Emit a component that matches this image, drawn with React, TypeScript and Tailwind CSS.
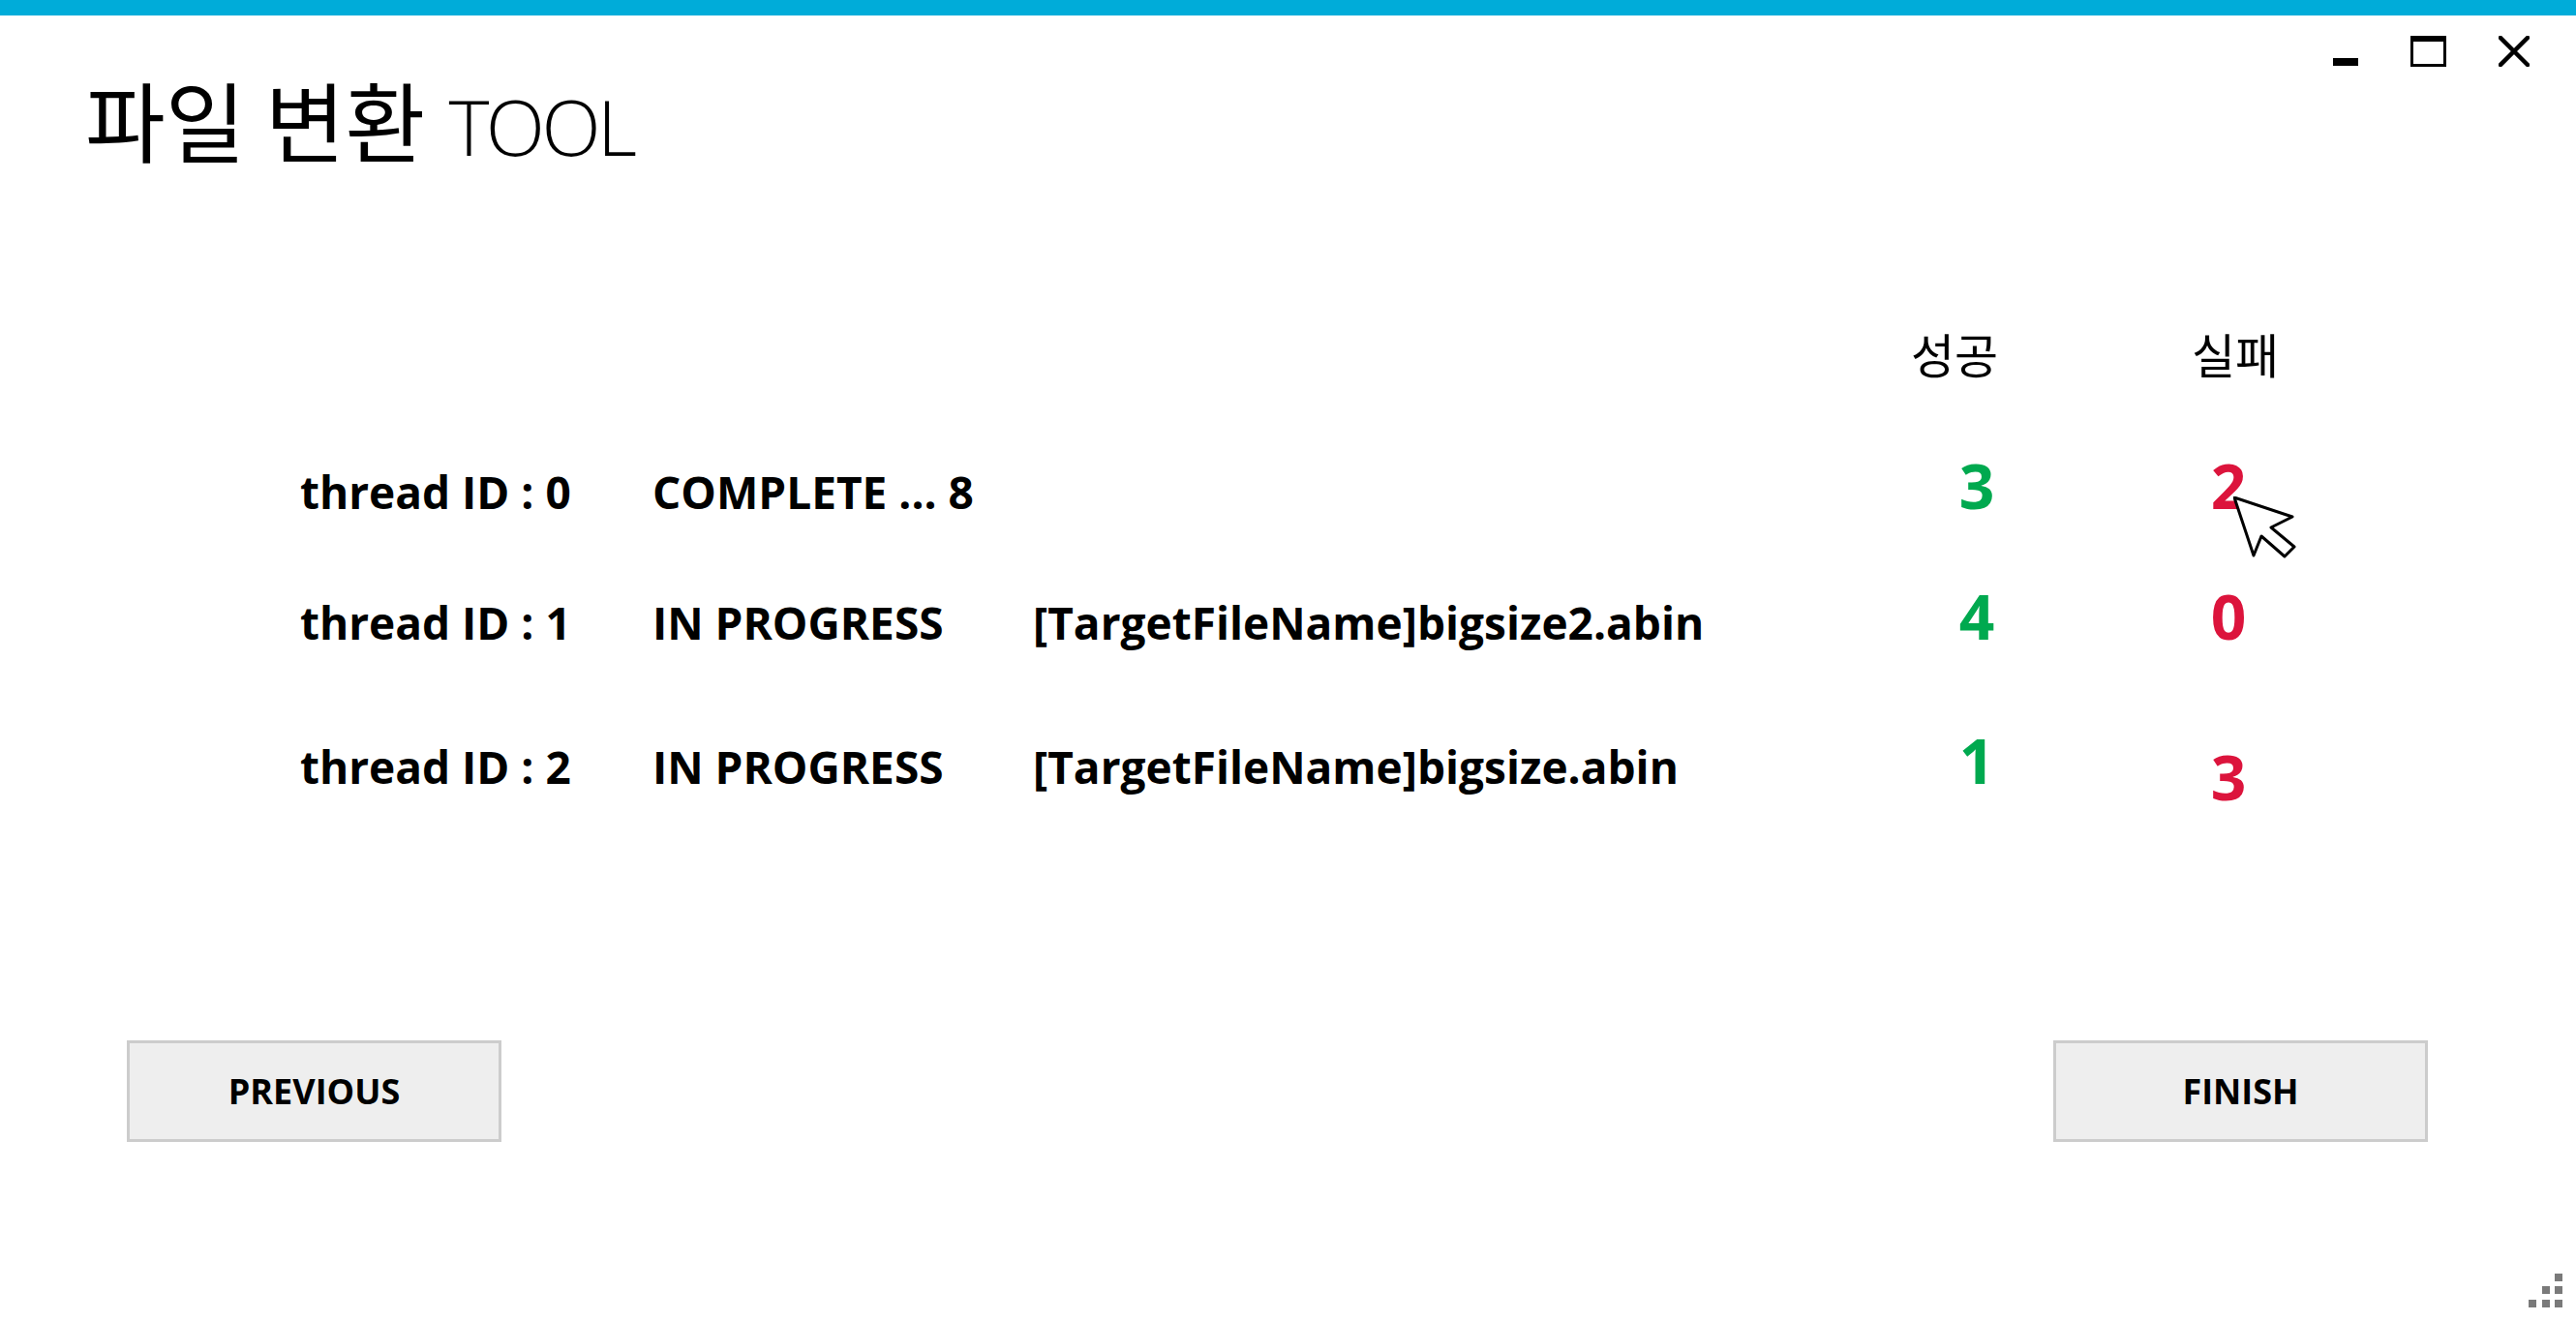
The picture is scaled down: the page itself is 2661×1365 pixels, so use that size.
import React from "react";

interface IThreadRow {
	id: number;
	status: string;
	file: string;
	success: number;
	fail: number;
	rowClass: string;
	failClass: string;
}

const rows: IThreadRow[] = [
	{ id: 0, status: "COMPLETE ... 8", file: "", success: 3, fail: 2, rowClass: "mt-[81px]", failClass: "" },
	{ id: 1, status: "IN PROGRESS", file: "[TargetFileName]bigsize2.abin", success: 4, fail: 0, rowClass: "mt-[71px]", failClass: "" },
	{ id: 2, status: "IN PROGRESS", file: "[TargetFileName]bigsize.abin", success: 1, fail: 3, rowClass: "mt-[85px]", failClass: "translate-y-[17px]" },
];

const WindowControls = () => (
	<div className="flex items-start gap-[54px] mt-[21px] mr-[48px]">
		<svg width="26" height="32" viewBox="0 0 26 32">
			<rect x="0" y="23" width="26" height="8" fill="#000" />
		</svg>
		<svg width="37" height="32" viewBox="0 0 37 32">
			<rect x="1.5" y="1.5" width="34" height="29" fill="none" stroke="#000" strokeWidth="3" />
			<rect x="0" y="0" width="37" height="6" fill="#000" />
		</svg>
		<svg width="32" height="32" viewBox="0 0 32 32">
			<path d="M2 2 L30 30 M30 2 L2 30" stroke="#000" strokeWidth="4.5" strokeLinecap="square" />
		</svg>
	</div>
);

const Button = ({ label }: { label: string }) => (
	<button className="w-[387px] h-[105px] bg-[#eeeeee] border-[3px] border-[#cccccc] flex items-center justify-center text-[36px] font-bold text-black">
		{label}
	</button>
);

const App = () => {
	return (
		<div className="w-[2661px] h-[1365px] bg-white relative flex flex-col overflow-hidden font-['Open_Sans','Noto_Sans_CJK_KR',sans-serif] text-black">
			<div className="h-[16px] bg-[#00acd9] shrink-0" />

			<header className="flex justify-between items-start">
				<h1 className="ml-[88px] mt-[61px] flex items-baseline leading-none">
					<span className="text-[90px] font-['Noto_Sans_CJK_KR',sans-serif] font-normal">파일 변환</span>
					<span className="ml-[24px] text-[80px] font-light tracking-[-3.5px]">TOOL</span>
				</h1>
				<WindowControls />
			</header>

			<main className="flex flex-col">
				<div className="flex mt-[170px] pl-[1974px] leading-none text-[49px] font-['Noto_Sans_CJK_KR',sans-serif]">
					<div className="w-[290px]">성공</div>
					<div>실패</div>
				</div>

				{rows.map((row) => (
					<div key={row.id} className={`${row.rowClass} flex items-baseline pl-[310px] leading-none font-bold`}>
						<div className="w-[364px] text-[46px]">thread ID : {row.id}</div>
						<div className="w-[393px] text-[46px]">{row.status}</div>
						<div className="w-[943px] text-[46px]">{row.file}</div>
						<div className="w-[64px] text-center text-[64px] text-[#00a94f]">{row.success}</div>
						<div className="w-[196px]" />
						<div className={`w-[64px] text-center text-[64px] text-[#dc143c] ${row.failClass}`}>{row.fail}</div>
					</div>
				))}
			</main>

			<footer className="flex justify-between mt-[257px] pl-[131px] pr-[153px]">
				<Button label="PREVIOUS" />
				<Button label="FINISH" />
			</footer>

			{/* mouse pointer over the fail count */}
			<svg className="absolute left-[2307px] top-[513px]" width="66" height="66" viewBox="0 0 66 66">
				<path d="M1 1 L61 21 L39 32 L63 52 L53 62 L29 41 L21 61 Z" fill="#fff" stroke="#000" strokeWidth="3" strokeLinejoin="round" />
			</svg>

			{/* resize grip */}
			<svg className="absolute left-[2612px] top-[1316px]" width="36" height="36" viewBox="0 0 36 36">
				{[
					[27, 0],
					[14, 13],
					[27, 13],
					[0, 27],
					[14, 27],
					[27, 27],
				].map(([x, y]) => (
					<rect key={`${x}-${y}`} x={x} y={y} width="8" height="8" fill="#7a7a7a" />
				))}
			</svg>
		</div>
	);
};

export default App;
